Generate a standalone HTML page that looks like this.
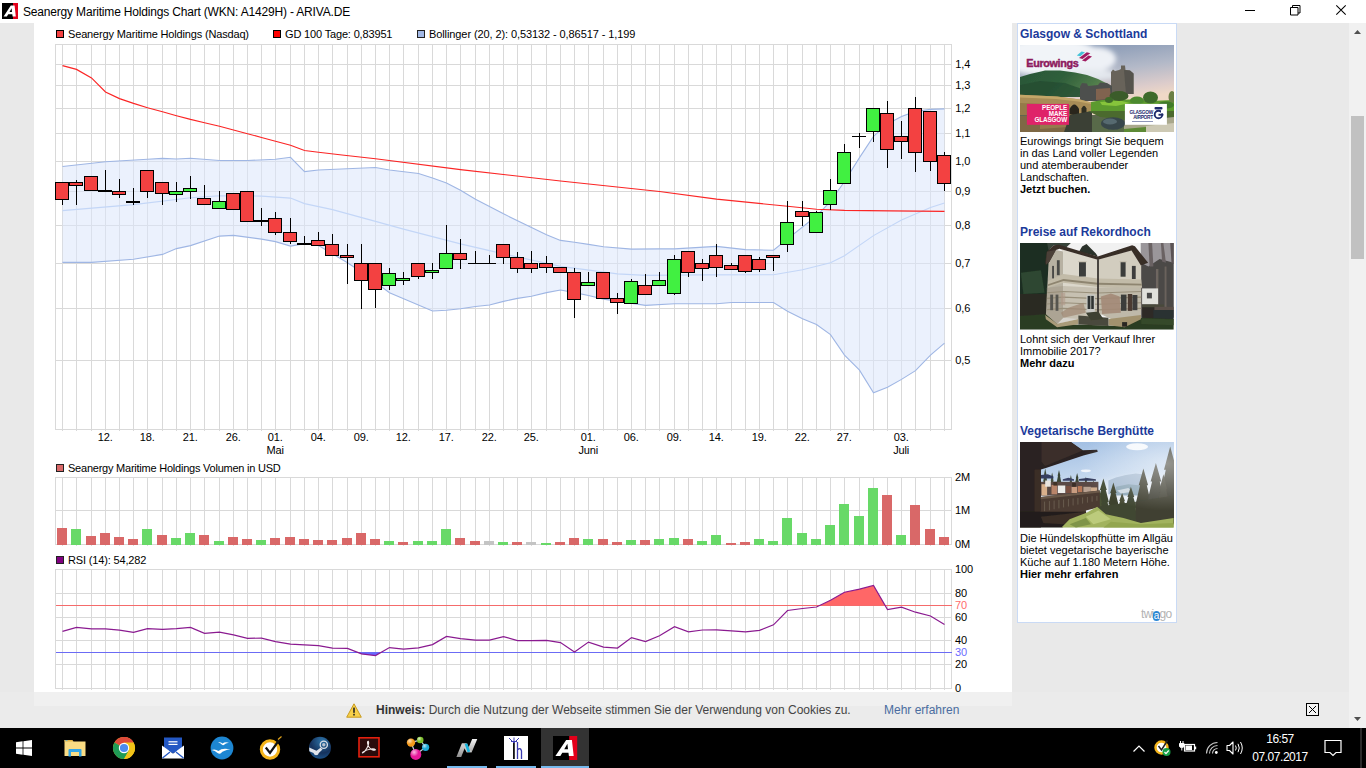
<!DOCTYPE html>
<html lang="de"><head><meta charset="utf-8"><title>Seanergy Maritime Holdings Chart (WKN: A1429H) - ARIVA.DE</title>
<style>
html,body{margin:0;padding:0}
body{width:1366px;height:768px;overflow:hidden;background:#fff;position:relative;font-family:"Liberation Sans",Arial,sans-serif;font-size:11px;color:#000}
#titlebar{position:absolute;left:0;top:0;width:1366px;height:23px;background:#fff}
#appicon{position:absolute;left:2px;top:3px}
#wtitle{position:absolute;left:23px;top:5px;font-size:12px;line-height:15px;white-space:nowrap;letter-spacing:-0.18px}
#wctl{position:absolute;left:1226px;top:0}
#leftstrip{position:absolute;left:0;top:23px;width:34px;height:705px;background:#e9e9e9}
#rightbg{position:absolute;left:1012px;top:23px;width:337px;height:669px;background:#e9e9e9}
#scroll{position:absolute;left:1349px;top:23px;width:17px;height:705px;background:#f1f1f1}
#thumb{position:absolute;left:2px;top:93px;width:13px;height:143px;background:#c1c1c1}
#cookie{position:absolute;left:0;top:692px;width:1349px;height:36px;background:#ebebeb}
#cookie2{position:absolute;left:34px;top:0;width:978px;height:14px;background:#f0f0f0}
#warn{position:absolute;left:346px;top:11px}
#ctext{position:absolute;left:376px;top:11px;font-size:12px;line-height:15px;color:#444;white-space:nowrap}
#ctext b{color:#333}
#cmore{position:absolute;left:884px;top:11px;font-size:12px;line-height:15px;color:#4a6da0;white-space:nowrap}
#cclose{position:absolute;left:1306px;top:11px}
#adpanel{position:absolute;left:1017px;top:23px;width:158px;height:598px;background:#fff;border:1px solid #c9daf5}
.adt{position:absolute;left:2px;font-weight:bold;font-size:12px;line-height:14px;color:#1b3a9a;white-space:nowrap}
.adimg{position:absolute;left:2px;width:154px;height:87px;overflow:hidden}
.adimg svg{display:block}
.adx{position:absolute;left:2px;font-size:11px;line-height:12px;color:#000;white-space:nowrap}
#taskbar{position:absolute;left:0;top:728px;width:1366px;height:40px;background:#000}
#twiago{position:absolute;left:123px;top:584px;font-size:12px;line-height:14px;color:#b3b3b3;letter-spacing:-0.7px;white-space:nowrap}
#twiago span{display:inline-block;width:7px;height:10px;line-height:9px;font-size:10px;text-align:center;vertical-align:-1px;color:#fff;background:#2a86d4;border-radius:4px;letter-spacing:0;margin:0 -0.5px}
#adpanel > *{margin-top:-1px}
.run{position:absolute;top:38px;height:2px;background:#76b9ed}

</style></head><body>
<div id="titlebar">
<svg id="appicon" width="16" height="16" viewBox="0 0 16 16"><rect width="16" height="16" fill="#000"/><rect x="11" y="0" width="5" height="16" fill="#e2001a"/><path d="M1.6 13.4 L8.8 2.6 H12.6 L13.8 13.4 H10.6 L10.3 11.2 H6.2 L4.9 13.4Z M7.5 8.9 H10 L9.6 5.2Z" fill="#fff" fill-rule="evenodd"/></svg>
<span id="wtitle">Seanergy Maritime Holdings Chart (WKN: A1429H) - ARIVA.DE</span>
<svg id="wctl" width="140" height="23" viewBox="0 0 140 23"><path d="M19 10.5H29" stroke="#000" stroke-width="1"/><path d="M64.5 7.5h7.5v7.5h-7.5z M66.5 7.5v-2h7.5v7.5h-2" fill="none" stroke="#000" stroke-width="1"/><path d="M110.3 5.3l9.4 9.4M119.7 5.3l-9.4 9.4" stroke="#000" stroke-width="1.05"/></svg>
</div>
<div id="leftstrip"></div>
<div id="rightbg"></div>
<svg width="978" height="669" viewBox="34 23 978 669" style="position:absolute;left:34px;top:23px" font-family="Liberation Sans, Arial, sans-serif" font-size="11" letter-spacing="-0.16">
<rect x="34" y="23" width="978" height="669" fill="#fff"/>
<path d="M62.5 44.5V431.0M76.5 44.5V431.0M91.5 44.5V431.0M105.5 44.5V431.0M119.5 44.5V431.0M133.5 44.5V431.0M147.5 44.5V431.0M162.5 44.5V431.0M176.5 44.5V431.0M190.5 44.5V431.0M204.5 44.5V431.0M219.5 44.5V431.0M233.5 44.5V431.0M247.5 44.5V431.0M261.5 44.5V431.0M275.5 44.5V431.0M290.5 44.5V431.0M304.5 44.5V431.0M318.5 44.5V431.0M332.5 44.5V431.0M347.5 44.5V431.0M361.5 44.5V431.0M375.5 44.5V431.0M389.5 44.5V431.0M403.5 44.5V431.0M418.5 44.5V431.0M432.5 44.5V431.0M446.5 44.5V431.0M460.5 44.5V431.0M475.5 44.5V431.0M489.5 44.5V431.0M503.5 44.5V431.0M517.5 44.5V431.0M531.5 44.5V431.0M546.5 44.5V431.0M560.5 44.5V431.0M574.5 44.5V431.0M588.5 44.5V431.0M603.5 44.5V431.0M617.5 44.5V431.0M631.5 44.5V431.0M645.5 44.5V431.0M659.5 44.5V431.0M674.5 44.5V431.0M688.5 44.5V431.0M702.5 44.5V431.0M716.5 44.5V431.0M731.5 44.5V431.0M745.5 44.5V431.0M759.5 44.5V431.0M773.5 44.5V431.0M787.5 44.5V431.0M802.5 44.5V431.0M816.5 44.5V431.0M830.5 44.5V431.0M844.5 44.5V431.0M859.5 44.5V431.0M873.5 44.5V431.0M887.5 44.5V431.0M901.5 44.5V431.0M915.5 44.5V431.0M930.5 44.5V431.0M944.5 44.5V431.0M55.5 64.5H951.5M55.5 85.5H951.5M55.5 108.5H951.5M55.5 133.5H951.5M55.5 161.5H951.5M55.5 191.5H951.5M55.5 225.5H951.5M55.5 263.5H951.5M55.5 308.5H951.5M55.5 360.5H951.5" stroke="#d9d9d9" stroke-width="1" fill="none" shape-rendering="crispEdges"/>
<rect x="55.5" y="44.5" width="896.0" height="385.0" fill="none" stroke="#d9d9d9" stroke-width="1" shape-rendering="crispEdges"/>
<polygon points="62.5,166.5 105.5,161.7 147.5,159.3 162.5,158.4 176.5,159.0 190.5,158.3 219.5,160.5 247.5,160.5 275.5,159.3 290.5,157.3 304.5,171.6 318.5,170.0 375.5,167.5 389.5,170.0 418.5,173.5 432.5,178.1 446.5,183.0 460.5,190.3 475.5,199.2 503.5,213.8 531.5,227.6 546.5,234.8 560.5,240.4 574.5,242.3 588.5,244.4 603.5,246.7 631.5,249.1 659.5,248.9 674.5,248.9 716.5,246.4 745.5,249.6 773.5,250.2 787.5,238.9 816.5,216.0 830.5,201.5 844.5,181.5 859.5,157.6 873.5,136.4 887.5,123.9 901.5,116.4 915.5,111.4 930.5,109.4 944.5,108.9 944.5,343.1 930.5,355.1 915.5,370.6 901.5,379.4 887.5,387.2 873.5,392.7 859.5,370.1 844.5,355.1 830.5,334.6 816.5,324.6 802.5,318.8 787.5,311.3 773.5,302.5 731.5,302.5 716.5,303.8 674.5,303.7 645.5,305.4 603.5,299.1 588.5,295.5 574.5,292.6 560.5,290.0 546.5,292.6 531.5,296.3 517.5,298.4 503.5,301.4 489.5,305.0 475.5,306.5 460.5,308.8 446.5,310.2 432.5,311.0 389.5,292.7 361.5,272.0 347.5,262.7 318.5,245.5 304.5,243.6 290.5,246.1 275.5,241.6 261.5,239.1 233.5,235.4 219.5,236.1 190.5,245.6 176.5,248.6 162.5,254.4 133.5,259.2 91.5,262.4 62.5,262.4" fill="#dbe6fb" fill-opacity="0.55" stroke="none"/>
<polyline points="62.5,166.5 105.5,161.7 147.5,159.3 162.5,158.4 176.5,159.0 190.5,158.3 219.5,160.5 247.5,160.5 275.5,159.3 290.5,157.3 304.5,171.6 318.5,170.0 375.5,167.5 389.5,170.0 418.5,173.5 432.5,178.1 446.5,183.0 460.5,190.3 475.5,199.2 503.5,213.8 531.5,227.6 546.5,234.8 560.5,240.4 574.5,242.3 588.5,244.4 603.5,246.7 631.5,249.1 659.5,248.9 674.5,248.9 716.5,246.4 745.5,249.6 773.5,250.2 787.5,238.9 816.5,216.0 830.5,201.5 844.5,181.5 859.5,157.6 873.5,136.4 887.5,123.9 901.5,116.4 915.5,111.4 930.5,109.4 944.5,108.9" fill="none" stroke="#9fb6e4" stroke-width="1.1"/>
<polyline points="62.5,262.4 91.5,262.4 133.5,259.2 162.5,254.4 176.5,248.6 190.5,245.6 219.5,236.1 233.5,235.4 261.5,239.1 275.5,241.6 290.5,246.1 304.5,243.6 318.5,245.5 347.5,262.7 361.5,272.0 389.5,292.7 432.5,311.0 446.5,310.2 460.5,308.8 475.5,306.5 489.5,305.0 503.5,301.4 517.5,298.4 531.5,296.3 546.5,292.6 560.5,290.0 574.5,292.6 588.5,295.5 603.5,299.1 645.5,305.4 674.5,303.7 716.5,303.8 731.5,302.5 773.5,302.5 787.5,311.3 802.5,318.8 816.5,324.6 830.5,334.6 844.5,355.1 859.5,370.1 873.5,392.7 887.5,387.2 901.5,379.4 915.5,370.6 930.5,355.1 944.5,343.1" fill="none" stroke="#9fb6e4" stroke-width="1.1"/>
<polyline points="62.5,210.6 133.5,204.6 190.5,197.8 219.5,195.8 261.5,196.1 290.5,198.1 304.5,203.6 332.5,209.6 375.5,221.4 403.5,229.1 460.5,243.9 503.5,253.9 560.5,266.4 617.5,273.9 645.5,275.4 700.0,274.9 773.5,274.7 802.5,269.7 830.5,262.7 844.5,255.7 873.5,235.6 901.5,220.1 930.5,207.6 944.5,203.1" fill="none" stroke="#c3d6f7" stroke-width="1.1"/>
<polyline points="62.5,65.6 76.5,69.4 91.5,77.9 105.5,91.9 119.5,98.6 133.5,103.4 147.5,107.7 162.5,111.7 176.5,115.7 190.5,119.4 204.5,122.7 219.5,126.2 233.5,130.0 247.5,133.7 261.5,137.5 275.5,141.2 290.5,145.2 304.5,150.5 318.5,152.2 342.0,155.0 375.5,158.8 460.5,169.6 560.5,181.0 659.5,191.5 716.5,199.1 787.5,206.3 816.5,209.3 844.5,210.4 890.4,210.9 944.5,211.4" fill="none" stroke="#fb2525" stroke-width="1.15"/>
<path d="M62.5 182.5V204.6" stroke="#000" stroke-width="1" shape-rendering="crispEdges"/>
<rect x="55.5" y="182.5" width="13" height="17" fill="#f34141" stroke="#000" stroke-width="1"/>
<path d="M76.5 180.0V204.6" stroke="#000" stroke-width="1" shape-rendering="crispEdges"/>
<rect x="69.5" y="182.5" width="13" height="3" fill="#f34141" stroke="#000" stroke-width="1"/>
<path d="M91.5 176.3V191.3" stroke="#000" stroke-width="1" shape-rendering="crispEdges"/>
<rect x="84.5" y="176.5" width="13" height="14" fill="#f34141" stroke="#000" stroke-width="1"/>
<path d="M105.5 170.0V191.3" stroke="#000" stroke-width="1" shape-rendering="crispEdges"/>
<rect x="98.0" y="190" width="14" height="2" fill="#000"/>
<path d="M119.5 179.0V198.3" stroke="#000" stroke-width="1" shape-rendering="crispEdges"/>
<rect x="112.5" y="191.5" width="13" height="3" fill="#f34141" stroke="#000" stroke-width="1"/>
<path d="M133.5 188.0V204.6" stroke="#000" stroke-width="1" shape-rendering="crispEdges"/>
<rect x="126.0" y="201" width="14" height="2" fill="#000"/>
<path d="M147.5 170.5V197.6" stroke="#000" stroke-width="1" shape-rendering="crispEdges"/>
<rect x="140.5" y="170.5" width="13" height="21" fill="#f34141" stroke="#000" stroke-width="1"/>
<path d="M162.5 182.5V204.6" stroke="#000" stroke-width="1" shape-rendering="crispEdges"/>
<rect x="155.5" y="182.5" width="13" height="11" fill="#f34141" stroke="#000" stroke-width="1"/>
<path d="M176.5 182.0V201.6" stroke="#000" stroke-width="1" shape-rendering="crispEdges"/>
<rect x="169.5" y="191.5" width="13" height="3" fill="#41f041" stroke="#000" stroke-width="1"/>
<path d="M190.5 176.0V198.6" stroke="#000" stroke-width="1" shape-rendering="crispEdges"/>
<rect x="183.5" y="188.5" width="13" height="3" fill="#41f041" stroke="#000" stroke-width="1"/>
<path d="M204.5 185.3V204.3" stroke="#000" stroke-width="1" shape-rendering="crispEdges"/>
<rect x="197.5" y="198.5" width="13" height="6" fill="#f34141" stroke="#000" stroke-width="1"/>
<path d="M219.5 191.3V208.3" stroke="#000" stroke-width="1" shape-rendering="crispEdges"/>
<rect x="212.5" y="201.5" width="13" height="7" fill="#41f041" stroke="#000" stroke-width="1"/>
<path d="M233.5 193.6V209.3" stroke="#000" stroke-width="1" shape-rendering="crispEdges"/>
<rect x="226.5" y="193.5" width="13" height="16" fill="#f34141" stroke="#000" stroke-width="1"/>
<path d="M247.5 191.6V221.4" stroke="#000" stroke-width="1" shape-rendering="crispEdges"/>
<rect x="240.5" y="191.5" width="13" height="30" fill="#f34141" stroke="#000" stroke-width="1"/>
<path d="M261.5 208.0V225.6" stroke="#000" stroke-width="1" shape-rendering="crispEdges"/>
<rect x="254.0" y="220" width="14" height="2" fill="#000"/>
<path d="M275.5 212.0V234.6" stroke="#000" stroke-width="1" shape-rendering="crispEdges"/>
<rect x="268.5" y="218.5" width="13" height="14" fill="#f34141" stroke="#000" stroke-width="1"/>
<path d="M290.5 218.0V243.9" stroke="#000" stroke-width="1" shape-rendering="crispEdges"/>
<rect x="283.5" y="232.5" width="13" height="9" fill="#f34141" stroke="#000" stroke-width="1"/>
<path d="M304.5 236.0V244.4" stroke="#000" stroke-width="1" shape-rendering="crispEdges"/>
<rect x="297.0" y="243" width="14" height="2" fill="#000"/>
<path d="M318.5 232.0V245.4" stroke="#000" stroke-width="1" shape-rendering="crispEdges"/>
<rect x="311.5" y="240.5" width="13" height="5" fill="#f34141" stroke="#000" stroke-width="1"/>
<path d="M332.5 234.0V255.4" stroke="#000" stroke-width="1" shape-rendering="crispEdges"/>
<rect x="325.5" y="244.5" width="13" height="11" fill="#f34141" stroke="#000" stroke-width="1"/>
<path d="M347.5 244.1V283.9" stroke="#000" stroke-width="1" shape-rendering="crispEdges"/>
<rect x="340.5" y="255.5" width="13" height="2" fill="#f34141" stroke="#000" stroke-width="1"/>
<path d="M361.5 244.1V308.5" stroke="#000" stroke-width="1" shape-rendering="crispEdges"/>
<rect x="354.5" y="263.5" width="13" height="17" fill="#f34141" stroke="#000" stroke-width="1"/>
<path d="M375.5 263.4V307.5" stroke="#000" stroke-width="1" shape-rendering="crispEdges"/>
<rect x="368.5" y="263.5" width="13" height="26" fill="#f34141" stroke="#000" stroke-width="1"/>
<path d="M389.5 268.1V289.7" stroke="#000" stroke-width="1" shape-rendering="crispEdges"/>
<rect x="382.5" y="273.5" width="13" height="12" fill="#41f041" stroke="#000" stroke-width="1"/>
<path d="M403.5 272.2V284.7" stroke="#000" stroke-width="1" shape-rendering="crispEdges"/>
<rect x="396.5" y="278.5" width="13" height="2" fill="#41f041" stroke="#000" stroke-width="1"/>
<path d="M418.5 263.4V278.7" stroke="#000" stroke-width="1" shape-rendering="crispEdges"/>
<rect x="411.5" y="263.5" width="13" height="13" fill="#f34141" stroke="#000" stroke-width="1"/>
<path d="M432.5 263.1V278.7" stroke="#000" stroke-width="1" shape-rendering="crispEdges"/>
<rect x="425.5" y="270.5" width="13" height="2" fill="#41f041" stroke="#000" stroke-width="1"/>
<path d="M446.5 225.1V268.4" stroke="#000" stroke-width="1" shape-rendering="crispEdges"/>
<rect x="439.5" y="253.5" width="13" height="15" fill="#41f041" stroke="#000" stroke-width="1"/>
<path d="M460.5 239.1V268.6" stroke="#000" stroke-width="1" shape-rendering="crispEdges"/>
<rect x="453.5" y="253.5" width="13" height="6" fill="#f34141" stroke="#000" stroke-width="1"/>
<path d="M475.5 251.1V263.4" stroke="#000" stroke-width="1" shape-rendering="crispEdges"/>
<rect x="468.0" y="263" width="14" height="1" fill="#000"/>
<path d="M489.5 255.1V263.4" stroke="#000" stroke-width="1" shape-rendering="crispEdges"/>
<rect x="482.0" y="263" width="14" height="1" fill="#000"/>
<path d="M503.5 244.4V263.6" stroke="#000" stroke-width="1" shape-rendering="crispEdges"/>
<rect x="496.5" y="244.5" width="13" height="13" fill="#f34141" stroke="#000" stroke-width="1"/>
<path d="M517.5 252.1V272.7" stroke="#000" stroke-width="1" shape-rendering="crispEdges"/>
<rect x="510.5" y="257.5" width="13" height="11" fill="#f34141" stroke="#000" stroke-width="1"/>
<path d="M531.5 251.1V272.7" stroke="#000" stroke-width="1" shape-rendering="crispEdges"/>
<rect x="524.5" y="263.5" width="13" height="5" fill="#f34141" stroke="#000" stroke-width="1"/>
<path d="M546.5 256.1V272.7" stroke="#000" stroke-width="1" shape-rendering="crispEdges"/>
<rect x="539.5" y="263.5" width="13" height="4" fill="#f34141" stroke="#000" stroke-width="1"/>
<path d="M560.5 267.4V272.4" stroke="#000" stroke-width="1" shape-rendering="crispEdges"/>
<rect x="553.5" y="267.5" width="13" height="5" fill="#f34141" stroke="#000" stroke-width="1"/>
<path d="M574.5 268.1V317.7" stroke="#000" stroke-width="1" shape-rendering="crispEdges"/>
<rect x="567.5" y="272.5" width="13" height="27" fill="#f34141" stroke="#000" stroke-width="1"/>
<path d="M588.5 272.2V285.4" stroke="#000" stroke-width="1" shape-rendering="crispEdges"/>
<rect x="581.5" y="282.5" width="13" height="3" fill="#41f041" stroke="#000" stroke-width="1"/>
<path d="M603.5 272.4V298.4" stroke="#000" stroke-width="1" shape-rendering="crispEdges"/>
<rect x="596.5" y="272.5" width="13" height="26" fill="#f34141" stroke="#000" stroke-width="1"/>
<path d="M617.5 293.2V313.7" stroke="#000" stroke-width="1" shape-rendering="crispEdges"/>
<rect x="610.5" y="298.5" width="13" height="4" fill="#f34141" stroke="#000" stroke-width="1"/>
<path d="M631.5 279.2V303.4" stroke="#000" stroke-width="1" shape-rendering="crispEdges"/>
<rect x="624.5" y="281.5" width="13" height="22" fill="#41f041" stroke="#000" stroke-width="1"/>
<path d="M645.5 274.2V294.4" stroke="#000" stroke-width="1" shape-rendering="crispEdges"/>
<rect x="638.5" y="285.5" width="13" height="9" fill="#f34141" stroke="#000" stroke-width="1"/>
<path d="M659.5 272.2V285.4" stroke="#000" stroke-width="1" shape-rendering="crispEdges"/>
<rect x="652.5" y="280.5" width="13" height="5" fill="#41f041" stroke="#000" stroke-width="1"/>
<path d="M674.5 255.1V294.7" stroke="#000" stroke-width="1" shape-rendering="crispEdges"/>
<rect x="667.5" y="259.5" width="13" height="34" fill="#41f041" stroke="#000" stroke-width="1"/>
<path d="M688.5 251.4V276.7" stroke="#000" stroke-width="1" shape-rendering="crispEdges"/>
<rect x="681.5" y="251.5" width="13" height="21" fill="#f34141" stroke="#000" stroke-width="1"/>
<path d="M702.5 259.2V280.7" stroke="#000" stroke-width="1" shape-rendering="crispEdges"/>
<rect x="695.5" y="263.5" width="13" height="5" fill="#f34141" stroke="#000" stroke-width="1"/>
<path d="M716.5 244.1V276.7" stroke="#000" stroke-width="1" shape-rendering="crispEdges"/>
<rect x="709.5" y="255.5" width="13" height="12" fill="#f34141" stroke="#000" stroke-width="1"/>
<path d="M731.5 263.2V269.4" stroke="#000" stroke-width="1" shape-rendering="crispEdges"/>
<rect x="724.5" y="265.5" width="13" height="4" fill="#f34141" stroke="#000" stroke-width="1"/>
<path d="M745.5 255.4V272.7" stroke="#000" stroke-width="1" shape-rendering="crispEdges"/>
<rect x="738.5" y="255.5" width="13" height="16" fill="#f34141" stroke="#000" stroke-width="1"/>
<path d="M759.5 257.2V271.7" stroke="#000" stroke-width="1" shape-rendering="crispEdges"/>
<rect x="752.5" y="259.5" width="13" height="10" fill="#f34141" stroke="#000" stroke-width="1"/>
<path d="M773.5 255.4V270.7" stroke="#000" stroke-width="1" shape-rendering="crispEdges"/>
<rect x="766.5" y="255.5" width="13" height="2" fill="#f34141" stroke="#000" stroke-width="1"/>
<path d="M787.5 201.1V251.7" stroke="#000" stroke-width="1" shape-rendering="crispEdges"/>
<rect x="780.5" y="222.5" width="13" height="22" fill="#41f041" stroke="#000" stroke-width="1"/>
<path d="M802.5 201.1V225.6" stroke="#000" stroke-width="1" shape-rendering="crispEdges"/>
<rect x="795.5" y="211.5" width="13" height="5" fill="#f34141" stroke="#000" stroke-width="1"/>
<path d="M816.5 211.1V232.4" stroke="#000" stroke-width="1" shape-rendering="crispEdges"/>
<rect x="809.5" y="212.5" width="13" height="20" fill="#41f041" stroke="#000" stroke-width="1"/>
<path d="M830.5 179.1V209.7" stroke="#000" stroke-width="1" shape-rendering="crispEdges"/>
<rect x="823.5" y="190.5" width="13" height="14" fill="#41f041" stroke="#000" stroke-width="1"/>
<path d="M844.5 144.2V183.4" stroke="#000" stroke-width="1" shape-rendering="crispEdges"/>
<rect x="837.5" y="152.5" width="13" height="31" fill="#41f041" stroke="#000" stroke-width="1"/>
<path d="M859.5 133.1V147.7" stroke="#000" stroke-width="1" shape-rendering="crispEdges"/>
<rect x="852.0" y="136" width="14" height="1" fill="#000"/>
<path d="M873.5 108.4V141.7" stroke="#000" stroke-width="1" shape-rendering="crispEdges"/>
<rect x="866.5" y="108.5" width="13" height="23" fill="#41f041" stroke="#000" stroke-width="1"/>
<path d="M887.5 101.1V167.7" stroke="#000" stroke-width="1" shape-rendering="crispEdges"/>
<rect x="880.5" y="113.5" width="13" height="36" fill="#f34141" stroke="#000" stroke-width="1"/>
<path d="M901.5 121.1V158.7" stroke="#000" stroke-width="1" shape-rendering="crispEdges"/>
<rect x="894.5" y="136.5" width="13" height="5" fill="#f34141" stroke="#000" stroke-width="1"/>
<path d="M915.5 97.1V171.7" stroke="#000" stroke-width="1" shape-rendering="crispEdges"/>
<rect x="908.5" y="108.5" width="13" height="44" fill="#f34141" stroke="#000" stroke-width="1"/>
<path d="M930.5 111.4V170.7" stroke="#000" stroke-width="1" shape-rendering="crispEdges"/>
<rect x="923.5" y="111.5" width="13" height="50" fill="#f34141" stroke="#000" stroke-width="1"/>
<path d="M944.5 152.2V190.7" stroke="#000" stroke-width="1" shape-rendering="crispEdges"/>
<rect x="937.5" y="155.5" width="13" height="28" fill="#f34141" stroke="#000" stroke-width="1"/>
<text x="955.3" y="68.0" fill="#000">1,4</text>
<text x="955.3" y="89.0" fill="#000">1,3</text>
<text x="955.3" y="112.0" fill="#000">1,2</text>
<text x="955.3" y="137.0" fill="#000">1,1</text>
<text x="955.3" y="165.0" fill="#000">1,0</text>
<text x="955.3" y="195.0" fill="#000">0,9</text>
<text x="955.3" y="229.0" fill="#000">0,8</text>
<text x="955.3" y="267.0" fill="#000">0,7</text>
<text x="955.3" y="312.0" fill="#000">0,6</text>
<text x="955.3" y="364.0" fill="#000">0,5</text>
<text x="105.2" y="441" text-anchor="middle" fill="#000">12.</text>
<text x="147.2" y="441" text-anchor="middle" fill="#000">18.</text>
<text x="190.2" y="441" text-anchor="middle" fill="#000">21.</text>
<text x="233.2" y="441" text-anchor="middle" fill="#000">26.</text>
<text x="275.2" y="441" text-anchor="middle" fill="#000">01.</text>
<text x="275.2" y="454.2" text-anchor="middle" fill="#000">Mai</text>
<text x="318.2" y="441" text-anchor="middle" fill="#000">04.</text>
<text x="361.2" y="441" text-anchor="middle" fill="#000">09.</text>
<text x="403.2" y="441" text-anchor="middle" fill="#000">12.</text>
<text x="446.2" y="441" text-anchor="middle" fill="#000">17.</text>
<text x="489.2" y="441" text-anchor="middle" fill="#000">22.</text>
<text x="531.2" y="441" text-anchor="middle" fill="#000">25.</text>
<text x="588.2" y="441" text-anchor="middle" fill="#000">01.</text>
<text x="588.2" y="454.2" text-anchor="middle" fill="#000">Juni</text>
<text x="631.2" y="441" text-anchor="middle" fill="#000">06.</text>
<text x="674.2" y="441" text-anchor="middle" fill="#000">09.</text>
<text x="716.2" y="441" text-anchor="middle" fill="#000">14.</text>
<text x="759.2" y="441" text-anchor="middle" fill="#000">19.</text>
<text x="802.2" y="441" text-anchor="middle" fill="#000">22.</text>
<text x="844.2" y="441" text-anchor="middle" fill="#000">27.</text>
<text x="901.2" y="441" text-anchor="middle" fill="#000">03.</text>
<text x="901.2" y="454.2" text-anchor="middle" fill="#000">Juli</text>
<rect x="56.5" y="30.5" width="7" height="7" fill="#f34141" stroke="#000" stroke-width="1"/>
<text x="68" y="37.5" fill="#000">Seanergy Maritime Holdings (Nasdaq)</text>
<rect x="273.5" y="30.5" width="7" height="7" fill="#f00" stroke="#000" stroke-width="1"/>
<text x="285" y="37.5" fill="#000">GD 100 Tage: 0,83951</text>
<rect x="417.5" y="30.5" width="7" height="7" fill="#a3b9e6" stroke="#222" stroke-width="1"/>
<text x="429" y="37.5" fill="#000" textLength="206.2" lengthAdjust="spacing">Bollinger (20, 2): 0,53132 - 0,86517 - 1,199</text>
<rect x="56.5" y="464.5" width="7" height="7" fill="#d96868" stroke="#222" stroke-width="1"/>
<text x="68" y="471.5" fill="#000" textLength="212.6" lengthAdjust="spacing">Seanergy Maritime Holdings Volumen in USD</text>
<rect x="56.5" y="556.5" width="7" height="7" fill="#800080" stroke="#222" stroke-width="1"/>
<text x="68" y="563.5" fill="#000">RSI (14): 54,282</text>
<path d="M62.5 477.5V546.0M76.5 477.5V546.0M91.5 477.5V546.0M105.5 477.5V546.0M119.5 477.5V546.0M133.5 477.5V546.0M147.5 477.5V546.0M162.5 477.5V546.0M176.5 477.5V546.0M190.5 477.5V546.0M204.5 477.5V546.0M219.5 477.5V546.0M233.5 477.5V546.0M247.5 477.5V546.0M261.5 477.5V546.0M275.5 477.5V546.0M290.5 477.5V546.0M304.5 477.5V546.0M318.5 477.5V546.0M332.5 477.5V546.0M347.5 477.5V546.0M361.5 477.5V546.0M375.5 477.5V546.0M389.5 477.5V546.0M403.5 477.5V546.0M418.5 477.5V546.0M432.5 477.5V546.0M446.5 477.5V546.0M460.5 477.5V546.0M475.5 477.5V546.0M489.5 477.5V546.0M503.5 477.5V546.0M517.5 477.5V546.0M531.5 477.5V546.0M546.5 477.5V546.0M560.5 477.5V546.0M574.5 477.5V546.0M588.5 477.5V546.0M603.5 477.5V546.0M617.5 477.5V546.0M631.5 477.5V546.0M645.5 477.5V546.0M659.5 477.5V546.0M674.5 477.5V546.0M688.5 477.5V546.0M702.5 477.5V546.0M716.5 477.5V546.0M731.5 477.5V546.0M745.5 477.5V546.0M759.5 477.5V546.0M773.5 477.5V546.0M787.5 477.5V546.0M802.5 477.5V546.0M816.5 477.5V546.0M830.5 477.5V546.0M844.5 477.5V546.0M859.5 477.5V546.0M873.5 477.5V546.0M887.5 477.5V546.0M901.5 477.5V546.0M915.5 477.5V546.0M930.5 477.5V546.0M944.5 477.5V546.0M55.5 510.5H951.5" stroke="#d9d9d9" stroke-width="1" fill="none" shape-rendering="crispEdges"/>
<rect x="55.5" y="477.5" width="896.0" height="67.0" fill="none" stroke="#d9d9d9" stroke-width="1" shape-rendering="crispEdges"/>
<rect x="57" y="528" width="10" height="17" fill="#d96868"/>
<rect x="71" y="529" width="10" height="16" fill="#68d968"/>
<rect x="86" y="536" width="10" height="9" fill="#d96868"/>
<rect x="100" y="533" width="10" height="12" fill="#d96868"/>
<rect x="114" y="537" width="10" height="8" fill="#d96868"/>
<rect x="128" y="539" width="10" height="6" fill="#d96868"/>
<rect x="142" y="529" width="10" height="16" fill="#68d968"/>
<rect x="157" y="535" width="10" height="10" fill="#d96868"/>
<rect x="171" y="538" width="10" height="7" fill="#68d968"/>
<rect x="185" y="533" width="10" height="12" fill="#68d968"/>
<rect x="199" y="535" width="10" height="10" fill="#d96868"/>
<rect x="214" y="541" width="10" height="4" fill="#68d968"/>
<rect x="228" y="537" width="10" height="8" fill="#d96868"/>
<rect x="242" y="539" width="10" height="6" fill="#d96868"/>
<rect x="256" y="540" width="10" height="5" fill="#68d968"/>
<rect x="270" y="538" width="10" height="7" fill="#d96868"/>
<rect x="285" y="537" width="10" height="8" fill="#d96868"/>
<rect x="299" y="539" width="10" height="6" fill="#d96868"/>
<rect x="313" y="540" width="10" height="5" fill="#d96868"/>
<rect x="327" y="540" width="10" height="5" fill="#d96868"/>
<rect x="342" y="538" width="10" height="7" fill="#d96868"/>
<rect x="356" y="533" width="10" height="12" fill="#d96868"/>
<rect x="370" y="539" width="10" height="6" fill="#d96868"/>
<rect x="384" y="541" width="10" height="4" fill="#68d968"/>
<rect x="398" y="542" width="10" height="3" fill="#d96868"/>
<rect x="413" y="541" width="10" height="4" fill="#68d968"/>
<rect x="427" y="541" width="10" height="4" fill="#68d968"/>
<rect x="441" y="529" width="10" height="16" fill="#68d968"/>
<rect x="455" y="538" width="10" height="7" fill="#d96868"/>
<rect x="470" y="541" width="10" height="4" fill="#d96868"/>
<rect x="484" y="541" width="10" height="4" fill="#c4c4c4"/>
<rect x="498" y="542" width="10" height="3" fill="#68d968"/>
<rect x="512" y="542" width="10" height="3" fill="#d96868"/>
<rect x="526" y="542" width="10" height="3" fill="#c4c4c4"/>
<rect x="541" y="543" width="10" height="2" fill="#68d968"/>
<rect x="555" y="542" width="10" height="3" fill="#d96868"/>
<rect x="569" y="538" width="10" height="7" fill="#d96868"/>
<rect x="583" y="539" width="10" height="6" fill="#68d968"/>
<rect x="598" y="539" width="10" height="6" fill="#d96868"/>
<rect x="612" y="542" width="10" height="3" fill="#d96868"/>
<rect x="626" y="540" width="10" height="5" fill="#68d968"/>
<rect x="640" y="540" width="10" height="5" fill="#d96868"/>
<rect x="654" y="539" width="10" height="6" fill="#68d968"/>
<rect x="669" y="538" width="10" height="7" fill="#68d968"/>
<rect x="683" y="539" width="10" height="6" fill="#d96868"/>
<rect x="697" y="541" width="10" height="4" fill="#68d968"/>
<rect x="711" y="535" width="10" height="10" fill="#68d968"/>
<rect x="726" y="543" width="10" height="2" fill="#d96868"/>
<rect x="740" y="542" width="10" height="3" fill="#d96868"/>
<rect x="754" y="539" width="10" height="6" fill="#68d968"/>
<rect x="768" y="541" width="10" height="4" fill="#68d968"/>
<rect x="782" y="518" width="10" height="27" fill="#68d968"/>
<rect x="797" y="533" width="10" height="12" fill="#68d968"/>
<rect x="811" y="539" width="10" height="6" fill="#68d968"/>
<rect x="825" y="525" width="10" height="20" fill="#68d968"/>
<rect x="839" y="504" width="10" height="41" fill="#68d968"/>
<rect x="854" y="516" width="10" height="29" fill="#68d968"/>
<rect x="868" y="488" width="10" height="57" fill="#68d968"/>
<rect x="882" y="495" width="10" height="50" fill="#d96868"/>
<rect x="896" y="535" width="10" height="10" fill="#68d968"/>
<rect x="910" y="505" width="10" height="40" fill="#d96868"/>
<rect x="925" y="529" width="10" height="16" fill="#d96868"/>
<rect x="939" y="537" width="10" height="8" fill="#d96868"/>
<text x="955" y="480.5" fill="#000">2M</text>
<text x="955" y="513.5" fill="#000">1M</text>
<text x="955" y="547.5" fill="#000">0M</text>
<path d="M62.5 569.5V690.0M76.5 569.5V690.0M91.5 569.5V690.0M105.5 569.5V690.0M119.5 569.5V690.0M133.5 569.5V690.0M147.5 569.5V690.0M162.5 569.5V690.0M176.5 569.5V690.0M190.5 569.5V690.0M204.5 569.5V690.0M219.5 569.5V690.0M233.5 569.5V690.0M247.5 569.5V690.0M261.5 569.5V690.0M275.5 569.5V690.0M290.5 569.5V690.0M304.5 569.5V690.0M318.5 569.5V690.0M332.5 569.5V690.0M347.5 569.5V690.0M361.5 569.5V690.0M375.5 569.5V690.0M389.5 569.5V690.0M403.5 569.5V690.0M418.5 569.5V690.0M432.5 569.5V690.0M446.5 569.5V690.0M460.5 569.5V690.0M475.5 569.5V690.0M489.5 569.5V690.0M503.5 569.5V690.0M517.5 569.5V690.0M531.5 569.5V690.0M546.5 569.5V690.0M560.5 569.5V690.0M574.5 569.5V690.0M588.5 569.5V690.0M603.5 569.5V690.0M617.5 569.5V690.0M631.5 569.5V690.0M645.5 569.5V690.0M659.5 569.5V690.0M674.5 569.5V690.0M688.5 569.5V690.0M702.5 569.5V690.0M716.5 569.5V690.0M731.5 569.5V690.0M745.5 569.5V690.0M759.5 569.5V690.0M773.5 569.5V690.0M787.5 569.5V690.0M802.5 569.5V690.0M816.5 569.5V690.0M830.5 569.5V690.0M844.5 569.5V690.0M859.5 569.5V690.0M873.5 569.5V690.0M887.5 569.5V690.0M901.5 569.5V690.0M915.5 569.5V690.0M930.5 569.5V690.0M944.5 569.5V690.0M55.5 593.5H951.5M55.5 617.5H951.5M55.5 640.5H951.5M55.5 664.5H951.5" stroke="#d9d9d9" stroke-width="1" fill="none" shape-rendering="crispEdges"/>
<rect x="55.5" y="569.5" width="896.0" height="119.0" fill="none" stroke="#d9d9d9" stroke-width="1" shape-rendering="crispEdges"/>
<polygon points="819.6,605.5 830.5,600.2 844.5,592.2 859.5,589.2 873.5,585.4 885.2,605.5" fill="#ff6767"/>
<polygon points="357.9,652.5 361.5,653.9 375.5,655.6 380.9,652.5" fill="#6767ff"/>
<path d="M55.5 605.5H951.5" stroke="#f56b6b" stroke-width="1" shape-rendering="crispEdges"/>
<path d="M55.5 652.5H951.5" stroke="#6b6bf5" stroke-width="1" shape-rendering="crispEdges"/>
<polyline points="62.5,631.4 76.5,627.4 91.5,628.9 105.5,628.9 119.5,630.1 133.5,632.4 147.5,628.6 162.5,629.4 176.5,628.6 190.5,627.4 204.5,633.4 219.5,632.1 233.5,634.9 247.5,638.4 261.5,638.1 275.5,641.6 290.5,644.1 304.5,644.9 318.5,645.6 332.5,648.1 347.5,648.4 361.5,653.9 375.5,655.6 389.5,647.6 403.5,649.1 418.5,647.9 432.5,644.6 446.5,636.4 460.5,638.6 475.5,640.1 489.5,640.1 503.5,636.6 517.5,640.6 531.5,640.6 546.5,640.4 560.5,642.6 574.5,651.9 588.5,642.1 603.5,647.1 617.5,648.1 631.5,637.6 645.5,641.6 659.5,635.7 674.5,626.7 688.5,631.8 702.5,630.0 716.5,629.8 731.5,630.8 745.5,631.8 759.5,630.3 773.5,624.8 787.5,610.5 802.5,608.5 816.5,607.0 830.5,600.2 844.5,592.2 859.5,589.2 873.5,585.4 887.5,609.5 901.5,607.2 915.5,612.2 930.5,616.0 944.5,624.5" fill="none" stroke="#8a1a90" stroke-width="1.2"/>
<text x="955" y="572.5" fill="#000">100</text>
<text x="955" y="596.5" fill="#000">80</text>
<text x="955" y="608.5" fill="#ff6b6b">70</text>
<text x="955" y="620.5" fill="#000">60</text>
<text x="955" y="643.5" fill="#000">40</text>
<text x="955" y="655.5" fill="#6b6bff">30</text>
<text x="955" y="667.5" fill="#000">20</text>
<text x="955" y="691.5" fill="#000">0</text>
</svg>
<div id="adpanel">
<div class="adt" style="top:4px">Glasgow &amp; Schottland</div>
<div class="adimg" style="top:22px">
<svg width="154" height="87" viewBox="0 0 154 87">
<defs>
<linearGradient id="sky1" x1="0.55" y1="0" x2="0.8" y2="1"><stop offset="0" stop-color="#8b9cb7"/><stop offset="0.28" stop-color="#b3b9c8"/><stop offset="0.5" stop-color="#dccccb"/><stop offset="0.62" stop-color="#efd8c6"/><stop offset="1" stop-color="#efd8c6"/></linearGradient>
<linearGradient id="hill1" x1="0" y1="0" x2="1" y2="0.3"><stop offset="0" stop-color="#2a5638"/><stop offset="0.5" stop-color="#2f5f3b"/><stop offset="1" stop-color="#5b8550"/></linearGradient>
<filter id="b1" x="-10%" y="-10%" width="120%" height="120%"><feGaussianBlur stdDeviation="0.7"/></filter>
<filter id="b2" x="-20%" y="-20%" width="140%" height="140%"><feGaussianBlur stdDeviation="2.4"/></filter>
</defs>
<rect width="154" height="87" fill="url(#sky1)"/>
<g filter="url(#b2)"><ellipse cx="30" cy="12" rx="52" ry="19" fill="#f1f4f8"/><ellipse cx="76" cy="14" rx="20" ry="12" fill="#eef1f6"/><ellipse cx="60" cy="30" rx="40" ry="6" fill="#e4e8ee"/></g>
<g filter="url(#b1)">
<path d="M0 32 L10 29 L21 26.5 L25 25.5 L40 25.5 L55 27.5 L67 30 L78 34 L86 38 L91 41 L92 52 L0 52Z" fill="url(#hill1)"/>
<path d="M0 40 L20 36 L45 38 L62 44 L62 52 L0 52Z" fill="#244a30" opacity="0.7"/>
<path d="M91 27 L93 24.5 L95 26 L99 25 L101 24 L101 20.5 L105 20.5 L105.5 25 L110 25.5 L113.5 28.5 L113.5 49 L91 49Z" fill="#67645a"/>
<path d="M104 25 L110 25.5 L113.5 28.5 L113.5 49 L106 49Z" fill="#55534d"/>
<path d="M60 41.5 L62 38 L67 38.5 L68 41 L78 40 L80 37.5 L87 38 L92 41 L92 56 L60 56Z" fill="#4e504d"/>
<path d="M76 44 L90 43 L91 54 L76 55Z" fill="#80634f"/>
<path d="M0 49.8 L37 51.6 L60 54.5 L71 57.5 L71 70 L0 72Z" fill="#a88c57"/>
<path d="M0 49.8 L37 51.6 L60 54.5 L71 57.5 L71 59 L58 56.5 L36 54 L0 52.5Z" fill="#c3a668"/>
<path d="M0 58 L50 60 L50 70 L0 72Z" fill="#957a4a"/>
<path d="M49.6 75 L49.6 64 Q54.3 55 59 64 L59 75Z" fill="#29281f"/><path d="M61.5 70 L61.5 63.5 Q64 58 66.5 63.5 L66.5 70Z" fill="#2f2d22"/><path d="M40 66 Q42.5 60.5 45 66Z" fill="#5c4a30"/>
<path d="M71 57 L82 55 L110 54.5 L130 56 L154 55 L154 66 L71 66Z" fill="#5b9a2d"/>
<path d="M80 57 L100 55.5 L110 58 L96 61 L82 60Z" fill="#86c43a"/>
<ellipse cx="99" cy="51" rx="9.5" ry="5" fill="#3b5b2a"/><ellipse cx="89" cy="55" rx="4" ry="3" fill="#3d6a2a"/>
<ellipse cx="117" cy="55.5" rx="7" ry="4" fill="#4c8a2d"/><ellipse cx="130.5" cy="52.5" rx="7.5" ry="6" fill="#3e6a2b"/><ellipse cx="152" cy="52" rx="3.5" ry="6" fill="#6a7f45"/><ellipse cx="146" cy="60" rx="8" ry="3.5" fill="#3f7a2a"/>
<rect x="0" y="70" width="154" height="17" fill="#5c6650"/>
<path d="M0 71 L50 69 L60 72 L52 87 L0 87Z" fill="#7e6845"/>
<path d="M20 74 L50 73 L48 82 L20 84Z" fill="#9a7e50" opacity="0.8"/>
<path d="M50 70 L72 66 L72 87 L44 87Z" fill="#3b4136"/>
<path d="M68 66 L154 66 L154 72 L104 75 L80 72Z" fill="#4b6b2f"/>
<path d="M72 72 L104 75 L104 87 L72 87Z" fill="#596a48"/>
<path d="M104 78 L154 72 L154 87 L104 87Z" fill="#a9a88c"/>
<path d="M126 81 L154 78 L154 87 L126 87Z" fill="#cdc9b4"/>
<path d="M104 84 L126 82 L126 87 L104 87Z" fill="#5d8a34"/>
<ellipse cx="93" cy="78.5" rx="12" ry="6.3" fill="#38474c"/><ellipse cx="90" cy="76.5" rx="7" ry="3" fill="#566a70"/>
</g>
<rect x="6.9" y="58.9" width="42.1" height="20.9" fill="#df2369"/>
<text font-family="Liberation Sans,Arial,sans-serif" font-weight="bold" font-size="6.3" fill="#fff" text-anchor="end" letter-spacing="-0.1"><tspan x="47" y="65.4">PEOPLE</tspan><tspan x="47" y="71.4">MAKE</tspan><tspan x="47" y="77.4">GLASGOW</tspan></text>
<rect x="104.9" y="58.9" width="42" height="20.9" fill="#fff"/>
<text font-family="Liberation Sans,Arial,sans-serif" font-weight="bold" font-size="4.8" fill="#1d2a6c" text-anchor="end" letter-spacing="-0.25"><tspan x="133" y="69">GLASGOW</tspan><tspan x="133" y="73.8">AIRPORT</tspan></text>
<circle cx="138.5" cy="69.5" r="3.8" fill="none" stroke="#1d2a6c" stroke-width="1.9"/><rect x="138.5" y="68.8" width="4.8" height="1.9" fill="#1d2a6c"/><rect x="134.5" y="62" width="8" height="2.6" rx="1" fill="#1d2a6c"/><rect x="141" y="65.3" width="3" height="3" fill="#fff"/>
<rect x="112" y="76" width="21" height="0.7" fill="#1d2a6c" opacity="0.7"/>
<text x="6.3" y="21.6" font-family="Liberation Sans,Arial,sans-serif" font-weight="bold" font-size="10.8" fill="#8d1a5e" stroke="#8d1a5e" stroke-width="0.45" letter-spacing="-0.35">Eurowings</text>
<path d="M56.8 10.4 L61.5 6.4 L65 7.2 L60.3 11.2Z" fill="#45c3d8"/><path d="M59 13 L66.8 7.2 L70.3 8.2 L62.5 14Z" fill="#a01a60"/><path d="M62 15.6 L68.5 10.4 L72 11.4 L65.5 16.6Z" fill="#a01a60"/>
</svg></div>
<div class="adx" style="top:112px">Eurowings bringt Sie bequem<br>in das Land voller Legenden<br>und atemberaubender<br>Landschaften.<br><b>Jetzt buchen.</b></div>
<div class="adt" style="top:202px">Preise auf Rekordhoch</div>
<div class="adimg" style="top:220px">
<svg width="154" height="87" viewBox="0 0 154 87">
<rect width="154" height="87" fill="#f1f1f1"/>
<g filter="url(#b1)">
<rect x="0.0" y="0.0" width="29.6" height="74.8" fill="#1e2f22"/>
<path d="M0.9 29.8 L20.9 27.2 L24.6 49.8 L3.4 51.0Z" fill="#2d4731"/>
<rect x="0.0" y="51.0" width="27.1" height="23.8" fill="#2f2c22" opacity="0.8"/>
<path d="M27.1 0.0 L50.9 0.0 L45.9 4.8 L33.4 2.5 L28.6 7.2Z" fill="#39443a"/>
<path d="M58.4 9.8 L62.1 3.5 L66.5 1.0 L70.9 5.4 L75.9 10.4 L77.8 13.5 L65.9 10.4Z" fill="#2a3129"/>
<rect x="120.9" y="0.0" width="32.8" height="74.8" fill="#4b4847"/>
<path d="M120.9 0.0 L153.6 0.0 L153.6 19.8 L139.6 16.0 L128.4 23.5 L120.9 19.8Z" fill="#9a969a"/>
<path d="M128.4 0.0 L132.1 0.0 L133.4 23.5 L129.6 23.5Z" fill="#6a6264"/>
<path d="M140.9 0.0 L143.4 0.0 L145.9 19.8 L142.1 18.5Z" fill="#6a6264"/>
<path d="M150.2 0.0 L153.6 0.0 L153.6 21.0 L151.5 19.8Z" fill="#5a5254"/>
<rect x="135.9" y="26.0" width="2.5" height="36.2" fill="#6e6660"/>
<rect x="144.6" y="23.5" width="1.9" height="41.2" fill="#6a625c"/>
<path d="M28.6 18.5 L35.9 7.0 L43.4 8.5 L43.4 74.8 L37.1 81.0 L25.9 72.2Z" fill="#b7b1a2"/>
<path d="M39.6 5.8 L77.8 16.2 L77.8 69.8 L58.4 76.0 L43.4 74.8 L43.4 8.5Z" fill="#dbd7cb"/>
<path d="M77.8 16.2 L111.5 7.2 L121.2 22.2 L121.2 74.8 L104.6 82.2 L77.8 69.8Z" fill="#d2cdbf"/>
<path d="M26.5 44.8 L43.4 42.9 L77.8 44.8 L121.2 42.9 L121.2 74.8 L104.6 82.2 L77.8 69.8 L58.4 76.0 L37.1 81.0 L25.9 72.2Z" fill="#8f8670" opacity="0.28"/>
<path d="M28.1 37.9 L43.4 31.0 L77.8 35.4 L121.2 36.6 L122.1 44.8 L77.8 44.1 L43.4 39.8 L27.8 44.8Z" fill="#c2bba8"/>
<path d="M28.1 41.2 L43.4 36.0 L77.8 39.8 L121.6 40.8 L121.9 42.5 L77.8 41.8 L43.4 37.9 L28.0 43.0Z" fill="#8e8570"/>
<path d="M27.1 49.8 L43.4 48.5 L77.8 50.0 L121.2 48.5 M27.1 55.4 L43.4 54.1 L77.8 55.6 L121.2 54.1 M27.1 61.0 L43.4 59.8 L77.8 61.2 L121.2 59.8 M27.1 66.6 L43.4 65.4 L77.8 66.9 L121.2 65.4 " stroke="#988f7a" stroke-width="1.1" fill="none"/>
<path d="M80.9 53.5 L90.9 50.4 L99.6 53.5 L100.9 69.8 L82.1 71.0Z" fill="#a38977" opacity="0.9"/>
<path d="M48.4 64.8 L63.4 59.8 L65.9 69.8 L43.4 74.8 L40.9 69.8Z" fill="#a08a76" opacity="0.75"/>
<path d="M40.9 49.8 L45.2 49.8 L45.2 62.2 L40.9 62.2Z" fill="#b09a88" opacity="0.6"/>
<path d="M25.2 19.8 L26.9 8.8 L33.4 2.5 L39.0 1.8 L77.8 13.5 L112.1 2.2 L114.9 3.2 L128.1 19.8 L120.9 22.5 L111.5 7.5 L77.8 16.8 L39.6 5.8 L35.9 7.0 L29.4 18.8 L26.1 22.0Z" fill="#382d28"/>
<path d="M26.9 8.8 L35.9 7.0 L29.4 18.8 L25.9 21.6Z" fill="#4c4138"/>
<rect x="77.1" y="16.2" width="1.8" height="53.5" fill="#3a3632"/>
<rect x="59.0" y="19.1" width="6.9" height="14.4" fill="#3a3c3a"/>
<rect x="100.6" y="19.1" width="5.0" height="14.6" fill="#3a3c3a"/>
<rect x="111.9" y="22.9" width="3.8" height="13.1" fill="#3e3e3c"/>
<rect x="36.9" y="17.2" width="2.8" height="15.0" fill="#4a4a46"/>
<rect x="32.1" y="22.9" width="1.9" height="12.5" fill="#4a4a46"/>
<rect x="100.9" y="51.6" width="5.6" height="16.2" fill="#3a3c3a"/>
<rect x="107.8" y="51.0" width="4.4" height="16.9" fill="#4b3a32"/>
<rect x="112.4" y="52.0" width="5.0" height="15.2" fill="#3c3e3c"/>
<rect x="30.2" y="51.6" width="2.9" height="15.6" fill="#555550"/>
<rect x="35.6" y="51.6" width="2.8" height="16.2" fill="#555550"/>
<rect x="66.5" y="51.6" width="8.4" height="19.6" fill="#c9cac6"/>
<rect x="67.6" y="52.9" width="6.2" height="13.1" fill="#2f3230"/>
<rect x="70.4" y="52.9" width="0.8" height="13.1" fill="#c9cac6"/>
<rect x="58.1" y="18.2" width="8.6" height="1.0" fill="#c6c0b0"/>
<rect x="99.6" y="18.2" width="7.0" height="1.0" fill="#c0baa8"/>
<rect x="122.1" y="45.4" width="16.0" height="15.9" fill="#e1e1dc"/>
<rect x="126.9" y="49.8" width="5.0" height="5.6" fill="#4a4a48"/>
<path d="M122.1 61.6 L144.0 61.6 L144.0 63.8 L122.1 64.5Z" fill="#4a4a3a"/>
<rect x="122.1" y="64.2" width="12.5" height="13.0" fill="#2f2c27"/>
<rect x="134.6" y="63.8" width="19.0" height="3.5" fill="#5a5048"/>
<rect x="133.4" y="67.0" width="20.2" height="9.6" fill="#2a3132"/>
<path d="M0.0 72.9 L25.9 71.2 L37.1 81.0 L104.6 82.9 L121.2 74.8 L153.6 76.0 L153.6 86.4 L0.0 86.4Z" fill="#2c3c22"/>
<path d="M121.2 75.4 L153.6 76.2 L153.6 82.2 L121.2 81.0Z" fill="#35482a"/>
<path d="M25.2 72.0 L37.1 80.8 L58.4 76.0 L58.4 81.2 L37.1 84.2 L25.9 76.2Z" fill="#a99b79"/>
<path d="M88.4 76.0 L120.9 72.0 L120.9 76.2 L104.6 84.2 L88.4 82.2Z" fill="#a2926e"/>
<path d="M58.4 72.5 L88.4 74.8 L88.4 82.9 L58.4 81.6Z" fill="#4a4a3c"/>
<path d="M65.9 69.8 L78.4 68.5 L83.4 76.0 L70.9 77.2Z" fill="#3d4030"/>
<rect x="102.1" y="79.1" width="5.0" height="4.6" fill="#2a2824"/>
</g>
</svg></div>
<div class="adx" style="top:310px">Lohnt sich der Verkauf Ihrer<br>Immobilie 2017?<br><b>Mehr dazu</b></div>
<div class="adt" style="top:401px">Vegetarische Berghütte</div>
<div class="adimg" style="top:419px">
<svg width="154" height="86" viewBox="0 0 154 86">
<defs><linearGradient id="sky3" x1="0.2" y1="0" x2="0.45" y2="1"><stop offset="0" stop-color="#9fbde2"/><stop offset="0.45" stop-color="#c5d8ee"/><stop offset="0.62" stop-color="#e9eff6"/><stop offset="1" stop-color="#eef2f6"/></linearGradient><radialGradient id="flare3" cx="0.95" cy="0.25" r="0.55"><stop offset="0" stop-color="#fff" stop-opacity="0.45"/><stop offset="1" stop-color="#fff" stop-opacity="0"/></radialGradient></defs>
<rect width="154" height="86" fill="url(#sky3)"/>
<g filter="url(#b1)">
<ellipse cx="117.1" cy="4.8" rx="11" ry="3.5" fill="#f5f8fc"/>
<ellipse cx="65.9" cy="28.8" rx="5" ry="1.4" fill="#f0f4fa"/>
<path d="M88.4 38.5 L95.9 35.4 L105.9 32.9 L115.9 31.6 L122.1 32.2 L122.1 52.2 L88.4 52.2Z" fill="#a9bdd3"/>
<path d="M95.9 44.8 L108.4 42.2 L120.9 43.5 L120.9 53.5 L95.9 53.5Z" fill="#8fa8b8"/>
<path d="M97.1 48.5 L108.4 46.0 L112.1 49.8 L100.9 51.6Z" fill="#cdd8e0"/>
<path d="M25.2 26.6 L26.5 32.8 L26.1 32.8 L27.2 39.4 L26.8 39.4 L28.0 47.2 L22.5 47.2 L23.8 39.4 L23.2 39.4 L24.4 32.8 L24.0 32.8Z" fill="#3f4a38"/>
<path d="M32.1 30.4 L33.1 34.7 L32.8 34.7 L33.6 39.3 L33.2 39.3 L34.2 44.8 L30.1 44.8 L31.0 39.3 L30.6 39.3 L31.5 34.7 L31.2 34.7Z" fill="#46503e"/>
<path d="M39.0 27.9 L40.4 33.7 L40.0 33.7 L41.2 39.9 L40.6 39.9 L42.0 47.2 L36.0 47.2 L37.4 39.9 L36.8 39.9 L38.0 33.7 L37.6 33.7Z" fill="#3a4534"/>
<path d="M50.9 32.9 L51.8 37.2 L51.5 37.2 L52.4 41.8 L52.0 41.8 L52.9 47.2 L48.8 47.2 L49.8 41.8 L49.4 41.8 L50.2 37.2 L49.9 37.2Z" fill="#46503e"/>
<path d="M57.1 31.0 L58.5 36.2 L58.1 36.2 L59.3 41.9 L58.8 41.9 L60.2 48.5 L54.1 48.5 L55.5 41.9 L54.9 41.9 L56.1 36.2 L55.8 36.2Z" fill="#3c4636"/>
<path d="M65.9 34.8 L67.0 38.9 L66.7 38.9 L67.7 43.3 L67.2 43.3 L68.3 48.5 L63.4 48.5 L64.5 43.3 L64.1 43.3 L65.1 38.9 L64.8 38.9Z" fill="#434d3a"/>
<path d="M73.4 38.5 L74.6 41.9 L74.3 41.9 L75.4 45.5 L74.9 45.5 L76.1 49.8 L70.6 49.8 L71.9 45.5 L71.4 45.5 L72.5 41.9 L72.1 41.9Z" fill="#465040"/>
<path d="M20.9 32.9 L27.8 32.2 L33.4 34.5 L33.4 36.6 L20.9 36.6Z" fill="#343c60"/>
<path d="M42.8 37.2 L48.4 35.8 L54.0 37.2 L54.0 38.8 L42.8 38.8Z" fill="#3a4266"/>
<path d="M59.0 37.0 L67.1 36.0 L75.9 37.2 L75.9 38.8 L59.0 38.8Z" fill="#333a5c"/>
<rect x="20.9" y="39.8" width="57.5" height="13.8" fill="#5a4a44"/>
<rect x="21.5" y="42.2" width="5.6" height="11.2" fill="#d9b08c"/>
<rect x="25.2" y="38.5" width="5.6" height="6.2" fill="#e8e4e0"/>
<rect x="31.5" y="42.9" width="5.6" height="9.4" fill="#b8846a"/>
<rect x="37.8" y="43.5" width="7.5" height="7.5" fill="#ecebe8"/>
<rect x="45.9" y="44.1" width="5.0" height="6.9" fill="#7a5040"/>
<rect x="51.5" y="44.8" width="5.6" height="6.2" fill="#c99c80"/>
<rect x="57.8" y="44.1" width="4.4" height="6.2" fill="#b87858"/>
<rect x="63.4" y="44.8" width="7.5" height="5.6" fill="#b9a292"/>
<rect x="70.9" y="45.4" width="6.2" height="4.4" fill="#cfae90"/>
<rect x="33.4" y="39.8" width="3.8" height="3.8" fill="#403028"/>
<rect x="52.1" y="41.0" width="3.8" height="3.8" fill="#3a2e28"/>
<path d="M83.4 36.6 L86.8 48.1 L85.8 48.1 L88.9 60.3 L87.5 60.3 L90.9 74.8 L75.8 74.8 L79.2 60.3 L77.9 60.3 L80.9 48.1 L79.9 48.1Z" fill="#414832"/>
<path d="M93.4 40.4 L96.5 51.1 L95.6 51.1 L98.4 62.5 L97.1 62.5 L100.2 76.0 L86.5 76.0 L89.6 62.5 L88.4 62.5 L91.1 51.1 L90.2 51.1Z" fill="#3c432f"/>
<path d="M102.1 51.0 L104.9 58.9 L104.2 58.9 L106.6 67.3 L105.5 67.3 L108.3 77.2 L95.9 77.2 L98.8 67.3 L97.6 67.3 L100.1 58.9 L99.3 58.9Z" fill="#464c34"/>
<path d="M110.9 44.8 L114.3 54.9 L113.3 54.9 L116.4 65.7 L115.0 65.7 L118.4 78.5 L103.3 78.5 L106.8 65.7 L105.4 65.7 L108.4 54.9 L107.4 54.9Z" fill="#3e4430"/>
<path d="M79.0 47.2 L80.9 54.0 L80.3 54.0 L82.0 61.2 L81.2 61.2 L83.1 69.8 L74.9 69.8 L76.8 61.2 L76.0 61.2 L77.7 54.0 L77.1 54.0Z" fill="#4a5236"/>
<path d="M123.4 26.6 L128.1 43.3 L126.8 43.3 L130.9 61.1 L129.0 61.1 L133.7 82.2 L113.1 82.2 L117.8 61.1 L115.9 61.1 L120.0 43.3 L118.7 43.3Z" fill="#3f4133"/>
<path d="M135.9 21.0 L141.2 39.4 L139.7 39.4 L144.4 59.0 L142.2 59.0 L147.6 82.2 L124.2 82.2 L129.5 59.0 L127.4 59.0 L132.1 39.4 L130.6 39.4Z" fill="#44443a"/>
<path d="M150.2 4.5 L156.5 27.8 L154.8 27.8 L160.2 52.7 L157.8 52.7 L164.0 82.2 L136.5 82.2 L142.8 52.7 L140.2 52.7 L145.8 27.8 L144.0 27.8Z" fill="#414136"/>
<path d="M143.4 32.2 L147.1 47.2 L146.1 47.2 L149.4 63.2 L147.9 63.2 L151.6 82.2 L135.1 82.2 L138.9 63.2 L137.4 63.2 L140.7 47.2 L139.6 47.2Z" fill="#4a483c"/>
<path d="M115.9 59.8 L153.6 53.5 L153.6 82.2 L115.9 82.2Z" fill="#3f4032"/>
<path d="M75.9 64.8 L115.9 59.8 L115.9 81.0 L75.9 77.2Z" fill="#414732"/>
<path d="M0.0 0.0 L50.9 0.0 L62.8 8.2 L77.1 7.8 L77.8 9.8 L63.4 13.5 L25.9 26.0 L20.9 27.5 L20.9 85.4 L0.0 85.4Z" fill="#2a2321"/>
<path d="M21.5 0.0 L50.9 0.0 L62.1 8.8 L25.2 24.1 L21.5 19.8Z" fill="#3b2f2a"/>
<path d="M14.6 27.5 L20.9 27.5 L20.9 69.8 L14.6 69.8Z" fill="#3a2d27"/>
<path d="M20.9 55.0 L79.6 48.5 L79.9 65.0 L65.9 68.5 L65.9 74.8 L20.9 75.8Z" fill="#4b3b31"/>
<path d="M20.9 55.0 L79.6 48.5 L79.6 50.5 L20.9 57.2Z" fill="#6a594a"/>
<path d="M24.6 59.6 L24.6 69.2 M29.4 59.1 L29.4 68.3 M34.1 58.5 L34.1 67.3 M38.9 58.0 L38.9 66.4 M43.6 57.5 L43.6 65.4 M48.4 57.0 L48.4 64.5 M53.1 56.4 L53.1 63.5 M57.9 55.9 L57.9 62.6 M62.6 55.4 L62.6 61.6 M67.4 54.9 L67.4 60.7 M72.1 54.3 L72.1 59.7 M76.9 53.8 L76.9 58.8 " stroke="#8a8070" stroke-width="0.6" fill="none" opacity="0.8"/>
<path d="M0.0 69.8 L65.9 69.8 L67.8 76.0 L42.1 85.4 L0.0 85.4Z" fill="#241e1b"/>
<path d="M20.9 74.8 L65.9 69.8 L65.9 76.0 L43.4 82.2 L23.4 81.0Z" fill="#3a2f28"/>
<path d="M41.5 85.4 L49.6 77.2 L67.1 70.4 L77.1 64.8 L85.9 72.2 L103.4 76.0 L120.9 81.0 L153.6 76.0 L153.6 85.4Z" fill="#a2b35e"/>
<path d="M65.9 74.8 L78.4 68.5 L90.9 77.2 L73.4 82.2Z" fill="#bccb7c"/>
<path d="M90.9 79.8 L120.9 82.2 L153.6 81.0 L153.6 85.4 L83.4 85.4Z" fill="#93a650"/>
<path d="M49.6 82.2 L65.9 76.0 L70.9 82.2 L55.9 85.4Z" fill="#7f9448"/>
</g>
<rect width="154" height="86" fill="url(#flare3)"/>
</svg></div>
<div class="adx" style="top:509px">Die Hündelskopfhütte im Allgäu<br>bietet vegetarische bayerische<br>Küche auf 1.180 Metern Höhe.<br><b>Hier mehr erfahren</b></div>
<div id="twiago">twi<span>a</span>go</div>
</div>

<div id="scroll"><div id="thumb"></div>
<svg width="17" height="705" style="position:absolute;left:0;top:0"><path d="M5 11l3.5-4 3.5 4z" fill="#505050"/><path d="M5 694l3.5 4 3.5-4z" fill="#505050"/></svg></div>
<div id="cookie"><div id="cookie2"></div>
<svg id="warn" width="16" height="15" viewBox="0 0 16 15"><path d="M8 0.8 L15.3 14.2 H0.7Z" fill="#f7d04a" stroke="#c89a1e" stroke-width="1" stroke-linejoin="round"/><rect x="7.2" y="4.6" width="1.6" height="5.2" fill="#222"/><rect x="7.2" y="10.8" width="1.6" height="1.7" fill="#222"/></svg>
<span id="ctext"><b>Hinweis:</b> Durch die Nutzung der Webseite stimmen Sie der Verwendung von Cookies zu.</span>
<span id="cmore">Mehr erfahren</span>
<svg id="cclose" width="13" height="13" viewBox="0 0 13 13"><rect x="0.5" y="0.5" width="12" height="12" fill="#f4f4f4" stroke="#000"/><path d="M3 3l7 7M10 3l-7 7" stroke="#000" stroke-width="1"/></svg>
</div>
<div id="taskbar">
<div style="position:absolute;left:541px;top:0;width:48px;height:40px;background:#333"></div>
<div class="run" style="left:447px;width:40px"></div><div class="run" style="left:496px;width:40px"></div><div class="run" style="left:541px;width:48px"></div>
<svg width="600" height="40" viewBox="0 0 600 40" style="position:absolute;left:0;top:0">
<defs>
<radialGradient id="gsteam" cx="0.6" cy="0.2" r="0.9"><stop offset="0" stop-color="#2d73a8"/><stop offset="0.6" stop-color="#16325c"/><stop offset="1" stop-color="#1b5a94"/></radialGradient>
<radialGradient id="gball" cx="0.35" cy="0.3" r="0.8"><stop offset="0" stop-color="#fff" stop-opacity="0.7"/><stop offset="0.5" stop-color="#fff" stop-opacity="0"/></radialGradient>
<linearGradient id="gsil" x1="0" y1="0" x2="0" y2="1"><stop offset="0" stop-color="#f4f4f4"/><stop offset="1" stop-color="#8e8e8e"/></linearGradient>
</defs>
<!-- windows -->
<path d="M16 14.3 L22.6 13.3 V19.6 H16Z M23.4 13.2 L32 12 V19.6 H23.4Z M16 20.4 H22.6 V26.7 L16 25.7Z M23.4 20.4 H32 V28 L23.4 26.8Z" fill="#fff"/>
<!-- folder -->
<path d="M64.5 12 H72 L73.5 13.5 H85.5 V28 H64.5Z" fill="#f9dc84"/><path d="M64.5 12 H72 L73.5 13.5 H64.5Z" fill="#e6b544"/><rect x="65.5" y="12.3" width="2" height="0.8" fill="#4fb4ee"/>
<path d="M68.5 28.5 V22 Q68.5 21 69.5 21 H80.5 Q81.5 21 81.5 22 V28.5 H79 V24 H71 V28.5Z" fill="#33a6e8"/>
<!-- chrome -->
<circle cx="124" cy="20" r="11" fill="#f2c318"/>
<path d="M124 20 L114.47 14.5 A11 11 0 0 1 133.53 14.5Z" fill="#dd4a3b"/><path d="M124 9 A11 11 0 0 1 133.53 14.5 L124 14.5Z" fill="#dd4a3b"/>
<path d="M124 20 L114.47 14.5 A11 11 0 0 0 124 31 L129 22Z" fill="#1f9b56"/>
<path d="M124 31 A11 11 0 0 0 133.53 14.5 L124 14.5 L129 23Z" fill="#f2c318"/>
<circle cx="124" cy="20" r="5.2" fill="#fff"/><circle cx="124" cy="20" r="4.1" fill="#4b8bf0"/>
<!-- mail -->
<path d="M164 9.5 H182 V24 H164Z" fill="#2458c4"/><rect x="168.5" y="13.2" width="9" height="1.2" fill="#fff"/><rect x="168.5" y="15.8" width="9" height="1.2" fill="#fff"/>
<path d="M162 17.5 L173 25.5 L184 17.5 V30.5 H162Z" fill="#fff"/><path d="M162.5 30 L170 24 M183.5 30 L176 24" stroke="#2458c4" stroke-width="1.3" fill="none"/><path d="M169 22.6 L173 25.6 L177 22.6 L177 20 L169 20Z" fill="#2458c4"/>
<!-- openoffice -->
<circle cx="222" cy="20" r="11.4" fill="#1d86d2"/>
<path d="M211.5 22 Q215 20.5 218.5 23 Q222 19.5 230.5 21.5 Q224 21.8 220.5 25.5 Q219 26 217.5 25 Q215 22.5 211.5 22Z" fill="#fff"/>
<path d="M218 14.5 Q220.5 13.8 222.5 15.5 Q225 13.5 229 14.8 Q225.5 15 223.8 17 Q222.8 17.4 222 16.8 Q220.5 15 218 14.5Z" fill="#fff"/>
<!-- norton -->
<circle cx="270" cy="21.5" r="8.7" fill="#fff" stroke="#f5b51b" stroke-width="3"/>
<path d="M265.8 19.5 L270 25 L279.5 11.5" stroke="#111" stroke-width="2.2" fill="none" stroke-linejoin="miter"/><path d="M278 11.5 L281.5 8.5" stroke="#e0a21a" stroke-width="1.2"/>
<!-- steam -->
<circle cx="320" cy="19.7" r="11" fill="url(#gsteam)"/>
<circle cx="323.8" cy="16.8" r="3.6" fill="none" stroke="#d9dee6" stroke-width="1.3"/><circle cx="323.8" cy="16.8" r="1.7" fill="#b8c2d0"/>
<path d="M309.2 19.5 L316.5 22.7 L320.5 19.8 L322.5 21.5 L318.8 25 Q318.5 27.2 316 27.2 Q313.8 27 313.5 25 L309.3 23.2Z" fill="#dfe3ea"/>
<!-- pdf -->
<rect x="359" y="9.8" width="20" height="19" fill="#2a0b0b" stroke="#e5200e" stroke-width="1.6"/>
<path d="M362.5 25 Q365 23.8 367 20 Q369.5 15 368.3 13.2 Q367.3 13 367.6 15.5 Q368.5 20 372 21.8 Q375 22.8 375.5 21.8 Q374.5 20.5 371 21 Q366 21.8 363.2 24 Q362 25 362.5 25Z" fill="none" stroke="#f2eaea" stroke-width="1.1"/>
<!-- molecule -->
<path d="M411 14.6 L420.2 12 L425.6 19.3 L415.8 26.4Z" fill="none" stroke="#c8d4e0" stroke-width="1.2"/>
<circle cx="411" cy="14.6" r="4.2" fill="#f59a1c"/><circle cx="411" cy="14.6" r="4.2" fill="url(#gball)"/>
<circle cx="420.2" cy="12" r="3.3" fill="#7cbf2a"/><circle cx="420.2" cy="12" r="3.3" fill="url(#gball)"/>
<circle cx="425.6" cy="19.3" r="3.6" fill="#1fa9d6"/><circle cx="425.6" cy="19.3" r="3.6" fill="url(#gball)"/>
<circle cx="415.8" cy="26.4" r="5.5" fill="#e6199a"/><circle cx="415.8" cy="26.4" r="5.5" fill="url(#gball)"/>
<!-- N -->
<path d="M456.4 29 L461.2 29 L466.6 15.4 L461.8 15.4Z M466.6 24.2 L471.7 24.2 L477.3 11 L472.2 11Z" fill="url(#gsil)"/><path d="M461.8 15.4 L466.6 15.4 L471.7 24.2 L466.6 24.2Z" fill="#c9c9c9"/><path d="M464.6 15.8 L467.4 15.4 L470.2 23.6 L467.6 24.2Z" fill="#19b4dc"/>
<!-- ih -->
<rect x="504" y="8" width="24" height="24" fill="#fff"/>
<rect x="513" y="15" width="1.8" height="16" fill="#111"/><path d="M517.5 31 V14 M517.5 22 Q520.5 19 521.5 23 V31" stroke="#3b3bb0" stroke-width="1.3" fill="none"/>
<path d="M514 15 L509 10 M514 15 V9.5 M514 15 L519 10 M511 13.5 L517 13.5" stroke="#3b3bb0" stroke-width="1" fill="none"/>
<!-- A -->
<rect x="553" y="8" width="24" height="24" fill="#000"/><rect x="569.2" y="8" width="8" height="24" fill="#e2001a"/>
<path transform="translate(553 8) scale(1.5)" d="M1.6 13.4 L8.8 2.6 H12.6 L13.8 13.4 H10.6 L10.3 11.2 H6.2 L4.9 13.4Z M7.5 8.9 H10 L9.6 5.2Z" fill="#fff" fill-rule="evenodd"/>
</svg>
<svg width="240" height="40" viewBox="1126 0 240 40" style="position:absolute;left:1126px;top:0" font-family="Liberation Sans, Arial, sans-serif">
<path d="M1133.5 23.5 L1139 18 L1144.5 23.5" stroke="#fff" stroke-width="1.2" fill="none"/>
<circle cx="1161.5" cy="19.5" r="6" fill="#fff" stroke="#f5b51b" stroke-width="2.4"/><path d="M1158.5 18 L1161.5 22 L1167.5 12.5" stroke="#222" stroke-width="1.5" fill="none"/><circle cx="1166.5" cy="24" r="4" fill="#18a048"/><path d="M1164.5 24 L1166 25.7 L1168.7 22.5" stroke="#fff" stroke-width="1.2" fill="none"/>
<rect x="1184.5" y="16.5" width="10" height="6.5" fill="none" stroke="#fff" stroke-width="1.2"/><rect x="1185.5" y="17.5" width="6.5" height="4.5" fill="#fff"/><rect x="1195" y="18.5" width="1.2" height="2.8" fill="#fff"/><path d="M1180.5 13 V15.5 M1183 13 V15.5 M1179.5 15.5 H1184 V18 Q1184 19.5 1181.8 19.5 Q1179.5 19.5 1179.5 18Z M1181.8 19.5 V22.5" stroke="#fff" stroke-width="1" fill="#fff"/>
<path d="M1206.5 25.5 A11 11 0 0 1 1217.5 14.5 M1209.5 25.5 A8 8 0 0 1 1217.5 17.5 M1212.5 25.5 A5 5 0 0 1 1217.5 20.5" stroke="#c8c8c8" stroke-width="1.1" fill="none"/><circle cx="1216.3" cy="24.5" r="1.4" fill="#fff"/>
<path d="M1227 17.5 H1229.5 L1233 14 V26 L1229.5 22.5 H1227Z" fill="none" stroke="#fff" stroke-width="1.1" stroke-linejoin="round"/><path d="M1235.5 17.5 Q1237 20 1235.5 22.5 M1238 15.8 Q1240.5 20 1238 24.2 M1240.5 14 Q1244 20 1240.5 26" stroke="#fff" stroke-width="1" fill="none"/>
<text x="1280" y="15" font-size="12" fill="#fff" text-anchor="middle" letter-spacing="-0.5">16:57</text>
<text x="1280" y="33" font-size="12" fill="#fff" text-anchor="middle" letter-spacing="-0.45">07.07.2017</text>
<path d="M1325 12.5 H1341 V24.5 H1336 L1333 27.5 L1330 24.5 H1325Z" fill="none" stroke="#fff" stroke-width="1.2"/>
<rect x="1360.5" y="0" width="1" height="40" fill="#555"/>
</svg>
</div>

</body></html>
